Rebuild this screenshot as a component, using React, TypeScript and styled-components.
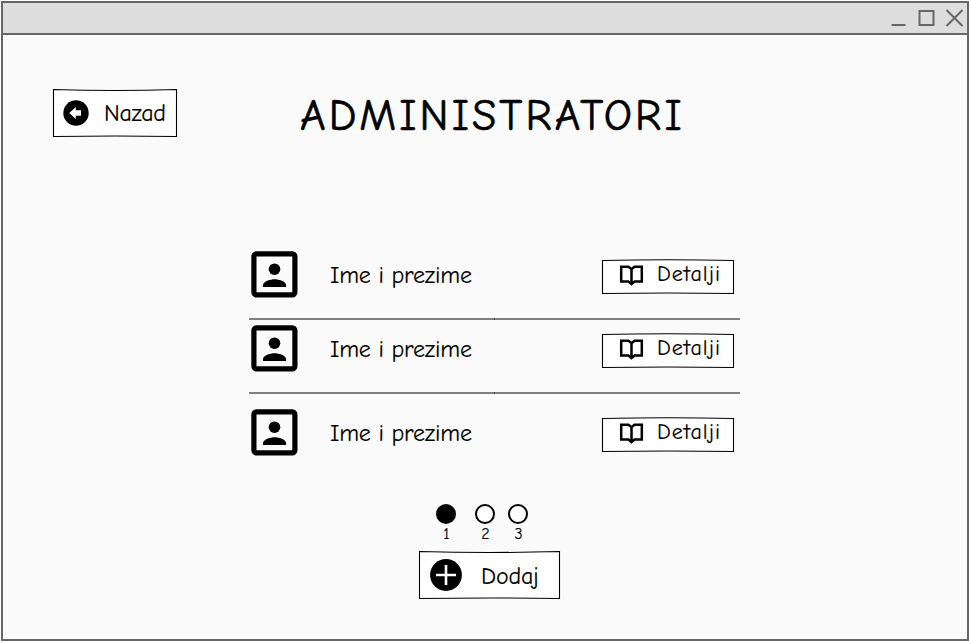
import React from 'react';
import styled, { createGlobalStyle } from 'styled-components';

const GlobalStyle = createGlobalStyle`
  * { box-sizing: border-box; }
  body { margin: 0; background: #fff; overflow: hidden; }
`;

const Window = styled.div`
  width: 968px;
  height: 640px;
  margin: 1px 0 0 1px;
  border: 2px solid #666;
  background: #fafafa;
  color: #000;
  font-family: 'Comic Sans MS', 'Comic Neue', Inter, sans-serif;
  font-feature-settings: 'cv08', 'cv11';
  -webkit-text-stroke: 0.15px #000;
`;

const TitleBar = styled.div`
  display: flex;
  align-items: center;
  justify-content: flex-end;
  height: 32px;
  background: #ddd;
  border-bottom: 2px solid #666;
`;

const Header = styled.header`
  display: grid;
  grid-template-columns: 124px 1fr;
  column-gap: 123px;
  height: 102px;
  padding: 54px 0 0 50px;
`;

const Title = styled.h1`
  margin: 0;
  font-size: 44px;
  line-height: 53px;
  font-weight: 400;
  letter-spacing: 3.1px;
  white-space: nowrap;
  -webkit-text-stroke: 0.7px #000;
`;

const SketchButton = styled.button<{ $w: number; $h: number }>`
  position: relative;
  display: flex;
  align-items: center;
  width: ${(p) => p.$w}px;
  height: ${(p) => p.$h}px;
  padding: 0;
  border: 0;
  background: none;
  color: inherit;
  font: inherit;
  font-feature-settings: inherit;
  text-align: left;
`;

const Outline = styled.svg`
  position: absolute;
  inset: 0;
`;

const ButtonIcon = styled.svg<{ $x: number; $y?: number }>`
  position: relative;
  flex: none;
  margin: ${(p) => p.$y ?? 0}px 0 0 ${(p) => p.$x}px;
`;

const ButtonLabel = styled.span<{ $gap: number; $size: number; $track: number; $lift?: number; $drop?: number }>`
  position: relative;
  margin-left: ${(p) => p.$gap}px;
  padding-top: ${(p) => p.$drop ?? 0}px;
  padding-bottom: ${(p) => p.$lift ?? 0}px;
  font-size: ${(p) => p.$size}px;
  line-height: 28px;
  letter-spacing: ${(p) => p.$track}px;
  white-space: nowrap;
`;

const List = styled.ul`
  list-style: none;
  width: 491px;
  margin: 109px 0 0 246px;
  padding: 0;
`;

const Row = styled.li<{ $h: number; $top: number; $line?: boolean }>`
  display: grid;
  grid-template-columns: 81px 272px 132px;
  align-items: start;
  height: ${(p) => p.$h}px;
  padding-top: ${(p) => p.$top}px;
  border-bottom: ${(p) => (p.$line ? '2px solid #808080' : '0')};
  border-image: ${(p) =>
    p.$line ? 'linear-gradient(90deg, #808080 245px, #444 245px 246px, #808080 246px) 2' : 'none'};
`;

const Avatar = styled.svg`
  display: block;
  margin-left: 2px;
`;

const Name = styled.span`
  margin-top: 9px;
  font-size: 24px;
  line-height: 31px;
  letter-spacing: -0.2px;
  white-space: nowrap;
`;

const RowAction = styled.div`
  padding-top: 9px;
`;

const Pager = styled.nav`
  display: flex;
  margin: 35px 0 0 429px;
`;

const Page = styled.button<{ $w: number }>`
  display: flex;
  flex-direction: column;
  align-items: center;
  width: ${(p) => p.$w}px;
  padding: 0;
  border: 0;
  background: none;
  font: 16px/20px 'Comic Sans MS', 'Comic Neue', 'DejaVu Sans', sans-serif;
  color: #000;
`;

const PageNumber = styled.span`
  padding-left: 1px;
`;

const Dot = styled.span<{ $active: boolean }>`
  width: 20px;
  height: 20px;
  border: 2px solid #000;
  border-radius: 50%;
  background: ${(p) => (p.$active ? '#000' : '#fff')};
`;

const Footer = styled.footer`
  margin: 7px 0 0 416px;
`;

function Frame({ w, h, bow = 2 }: { w: number; h: number; bow?: number }) {
  const r = w - 0.5;
  const b = h - 0.5;
  return (
    <Outline width={w} height={h} overflow="visible" fill="#fff" stroke="#000" strokeWidth="1.1">
      <path d={`M.5 .5Q${w / 2} ${0.5 + bow} ${r} .5V${b}Q${w / 2} ${b - 1} .5 ${b}Z`} />
    </Outline>
  );
}

function PersonIcon() {
  return (
    <Avatar width="47" height="47" viewBox="0 0 47 47">
      <rect x="2.9" y="2.9" width="41" height="41" rx="2.6" fill="none" stroke="#000" strokeWidth="5.2" />
      <circle cx="23.5" cy="18.2" r="5.8" />
      <path d="M12 36v-1.8c0-4 7.6-6 11.6-6s11.5 2 11.5 6V36z" />
    </Avatar>
  );
}

function DetailsButton() {
  return (
    <SketchButton $w={132} $h={34}>
      <Frame w={132} h={34} bow={-1.4} />
      <ButtonIcon $x={17} $y={-2} width="25" height="22" viewBox="0 0 25 22">
        <path
          d="M2.200 1.700H9.500L12.500 4.200L15.500 1.700H22.800V16.600H15.500L12.500 19.200L9.500 16.600H2.200ZM12.500 4V19"
          fill="none"
          stroke="#000"
          strokeWidth="2.500"
        />
      </ButtonIcon>
      <ButtonLabel $gap={13} $size={22} $track={1} $lift={6}>Detalji</ButtonLabel>
    </SketchButton>
  );
}

const rows = [
  { h: 74, top: 5, line: true },
  { h: 74, top: 5, line: true },
  { h: 75, top: 15, line: false },
];

const pages = [
  { n: 1, w: 28 },
  { n: 2, w: 50 },
  { n: 3, w: 16 },
];

export default function App() {
  return (
    <>
      <GlobalStyle />
      <Window>
        <TitleBar>
          <svg width="76" height="30" fill="none" stroke="#666" strokeWidth="2">
            <path d="M.6 22H14.500M28.500 8H42.500V22H28.500ZM55.500 7L71.500 23M71.500 7L55.500 23" />
          </svg>
        </TitleBar>
        <Header>
          <SketchButton $w={124} $h={48}>
            <Frame w={124} h={48} />
            <ButtonIcon $x={10} width="26" height="26" viewBox="0 0 26 26">
              <circle cx="13" cy="13" r="12.7" />
              <path d="M6.300 13L12.800 7V10.300H18V15.700H12.800V19Z" fill="#fff" />
            </ButtonIcon>
            <ButtonLabel $gap={15} $size={24} $track={-0.3}>Nazad</ButtonLabel>
          </SketchButton>
          <Title>ADMINISTRATORI</Title>
        </Header>
        <List>
          {rows.map((r, i) => (
            <Row key={i} $h={r.h} $top={r.top} $line={r.line}>
              <PersonIcon />
              <Name>Ime i prezime</Name>
              <RowAction>
                <DetailsButton />
              </RowAction>
            </Row>
          ))}
        </List>
        <Pager>
          {pages.map((p) => (
            <Page key={p.n} $w={p.w}>
              <Dot $active={p.n === 1} />
              <PageNumber>{p.n}</PageNumber>
            </Page>
          ))}
        </Pager>
        <Footer>
          <SketchButton $w={141} $h={48}>
            <Frame w={141} h={48} />
            <ButtonIcon $x={11} width="32" height="32" viewBox="0 0 32 32">
              <circle cx="16" cy="16" r="15.900" />
              <path d="M16 6V26M6 16H26" stroke="#fff" strokeWidth="2.600" />
            </ButtonIcon>
            <ButtonLabel $gap={19} $size={24} $track={-0.2} $drop={2}>Dodaj</ButtonLabel>
          </SketchButton>
        </Footer>
      </Window>
    </>
  );
}
